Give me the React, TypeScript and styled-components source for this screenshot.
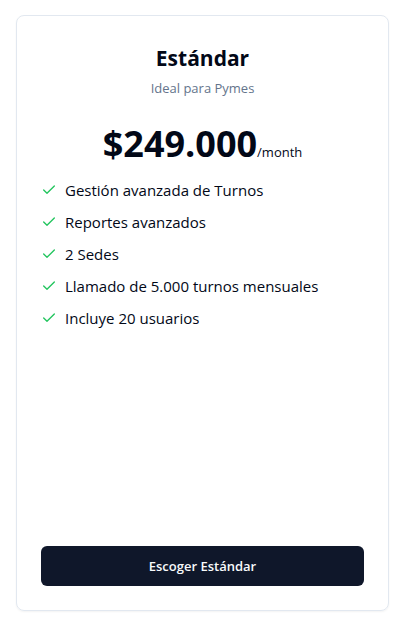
import React from "react";
import styled, { createGlobalStyle } from "styled-components";
import { Check } from "lucide-react";

const GlobalStyle = createGlobalStyle`
  *, *::before, *::after { box-sizing: border-box; }
  html, body, #root { height: 100%; }
  body {
    margin: 0;
    background: #ffffff;
    color: #020817;
    font-family: "Segoe UI", "Open Sans", "Noto Sans", sans-serif;
    font-size: 15px;
    line-height: 24px;
  }
`;

const Page = styled.main`
  display: flex;
  min-height: 100%;
  padding: 15px 16px 19px;
`;

const Card = styled.article`
  display: flex;
  flex: 1;
  flex-direction: column;
  border: 1px solid #e2e8f0;
  border-radius: 8px;
  box-shadow: 0 1px 2px rgba(0, 0, 0, 0.05);
`;

const CardHeader = styled.header`
  display: flex;
  flex-direction: column;
  gap: 8px;
  padding: 30px 24px 26px;
  text-align: center;
`;

const Title = styled.h3`
  margin: 0;
  font-size: 21px;
  font-weight: 700;
  line-height: 24px;
`;

const Description = styled.p`
  margin: 0;
  color: #64748b;
  font-size: 13px;
  line-height: 20px;
`;

const CardContent = styled.div`
  flex: 1;
  padding: 0 24px;
`;

const Price = styled.p`
  margin: 0 0 14px;
  font-size: 36px;
  font-weight: 700;
  line-height: 40px;
  text-align: center;
`;

const Period = styled.span`
  font-size: 13px;
  font-weight: 400;
  line-height: 20px;
`;

const Features = styled.ul`
  display: flex;
  flex-direction: column;
  gap: 8px;
  margin: 0;
  padding: 0;
  list-style: none;
`;

const Feature = styled.li`
  display: flex;
  align-items: center;
  gap: 8px;
`;

const CheckIcon = styled(Check)`
  flex: none;
  color: #22c55e;
`;

const CardFooter = styled.footer`
  display: flex;
  padding: 24px;
`;

const Button = styled.button`
  flex: 1;
  height: 40px;
  padding: 8px 16px;
  border: 0;
  border-radius: 6px;
  background: #0f172a;
  color: #f8fafc;
  font-family: inherit;
  font-size: 13px;
  font-weight: 600;
  line-height: 20px;
  cursor: pointer;
`;

const features = [
  "Gestión avanzada de Turnos",
  "Reportes avanzados",
  "2 Sedes",
  "Llamado de 5.000 turnos mensuales",
  "Incluye 20 usuarios",
];

export default function App() {
  return (
    <>
      <GlobalStyle />
      <Page>
        <Card>
          <CardHeader>
            <Title>Estándar</Title>
            <Description>Ideal para Pymes</Description>
          </CardHeader>
          <CardContent>
            <Price>
              $249.000<Period>/month</Period>
            </Price>
            <Features>
              {features.map((feature) => (
                <Feature key={feature}>
                  <CheckIcon size={16} strokeWidth={2} aria-hidden="true" />
                  <span>{feature}</span>
                </Feature>
              ))}
            </Features>
          </CardContent>
          <CardFooter>
            <Button type="button">Escoger Estándar</Button>
          </CardFooter>
        </Card>
      </Page>
    </>
  );
}
